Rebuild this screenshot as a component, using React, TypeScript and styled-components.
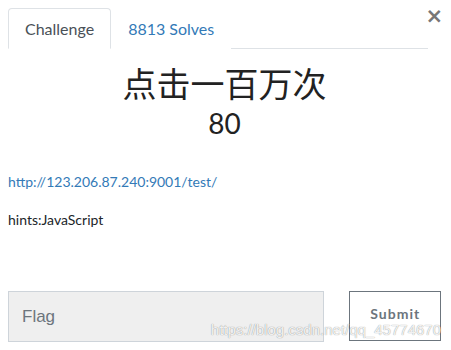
import React from "react";
import styled, { createGlobalStyle } from "styled-components";

const Global = createGlobalStyle`
  html, body { margin: 0; padding: 0; background: #fff; }
  body { font-family: Lato, "Noto Sans", sans-serif; color: #212529; }
`;

const Modal = styled.div`
  position: relative;
  width: 451px;
  height: 350px;
  padding: 7px 10px 0 8px;
  box-sizing: border-box;
  display: flex;
  flex-direction: column;
`;

const TabBar = styled.div`
  display: flex;
  align-items: flex-end;
  width: 420px;
  height: 41px;
  border-bottom: 1px solid #dee2e6;
`;

const Tab = styled.div<{ $active?: boolean }>`
  height: 41px;
  box-sizing: border-box;
  padding: 0 16px;
  display: flex;
  align-items: center;
  font-size: 16px;
  margin-bottom: -1px;
  border: 1px solid ${(p) => (p.$active ? "#dee2e6" : "transparent")};
  border-bottom-color: ${(p) => (p.$active ? "#fff" : "transparent")};
  border-radius: 4px 4px 0 0;
  background: #fff;
  color: ${(p) => (p.$active ? "#495057" : "#337ab7")};
`;

const Close = styled.span`
  position: absolute;
  top: 6px;
  right: 8px;
  font-family: "DejaVu Sans", sans-serif;
  font-size: 21px;
  font-weight: bold;
  color: #777;
  line-height: 1;
`;

const Title = styled.h2`
  margin: 16px 0 0;
  text-align: center;
  font-family: "Noto Sans CJK SC", sans-serif;
  font-weight: 400;
  font-size: 34px;
  line-height: 36px;
  color: #222;
`;

const Points = styled.h3`
  margin: 5px 0 0;
  text-align: center;
  font-weight: 400;
  font-size: 28px;
  line-height: 34px;
  color: #222;
`;

const Desc = styled.div`
  margin-top: 32px;
  font-size: 14px;
  line-height: 20px;
`;

const Para = styled.p`
  margin: 0 0 18px;
`;

const Link = styled.a`
  color: #337ab7;
  text-decoration: none;
`;

const Form = styled.div`
  margin-top: auto;
  margin-bottom: 8px;
  display: flex;
  gap: 25px;
  align-items: flex-start;
`;

const Input = styled.div`
  width: 318px;
  height: 51px;
  box-sizing: border-box;
  background: #efefef;
  border: 1px solid #ced4da;
  padding-left: 13px;
  display: flex;
  align-items: center;
  font-family: "Liberation Sans", Arial, sans-serif;
  font-size: 17px;
  color: #6c757d;
`;

const Button = styled.div`
  width: 92px;
  height: 50px;
  box-sizing: border-box;
  border: 1px solid #6c757d;
  display: flex;
  align-items: center;
  justify-content: center;
  padding-bottom: 6px;
  font-weight: 700;
  font-size: 14px;
  letter-spacing: 1px;
  color: #6c757d;
`;

const Watermark = styled.span`
  position: absolute;
  right: 10px;
  bottom: 12px;
  font-family: "Liberation Sans", Arial, sans-serif;
  font-size: 15px;
  color: rgba(255, 255, 255, 0.9);
  text-shadow: 0 0 1px rgba(0, 0, 0, 0.35), 0 0 1px rgba(0, 0, 0, 0.2);
  pointer-events: none;
`;

export default function App() {
  return (
    <>
      <Global />
      <Modal>
        <TabBar>
          <Tab $active>Challenge</Tab>
          <Tab>8813 Solves</Tab>
        </TabBar>
        <Close>×</Close>
        <Title>点击一百万次</Title>
        <Points>80</Points>
        <Desc>
          <Para>
            <Link href="#">http://123.206.87.240:9001/test/</Link>
          </Para>
          <Para>hints:JavaScript</Para>
        </Desc>
        <Form>
          <Input>Flag</Input>
          <Button>Submit</Button>
        </Form>
        <Watermark>https://blog.csdn.net/qq_45774670</Watermark>
      </Modal>
    </>
  );
}
